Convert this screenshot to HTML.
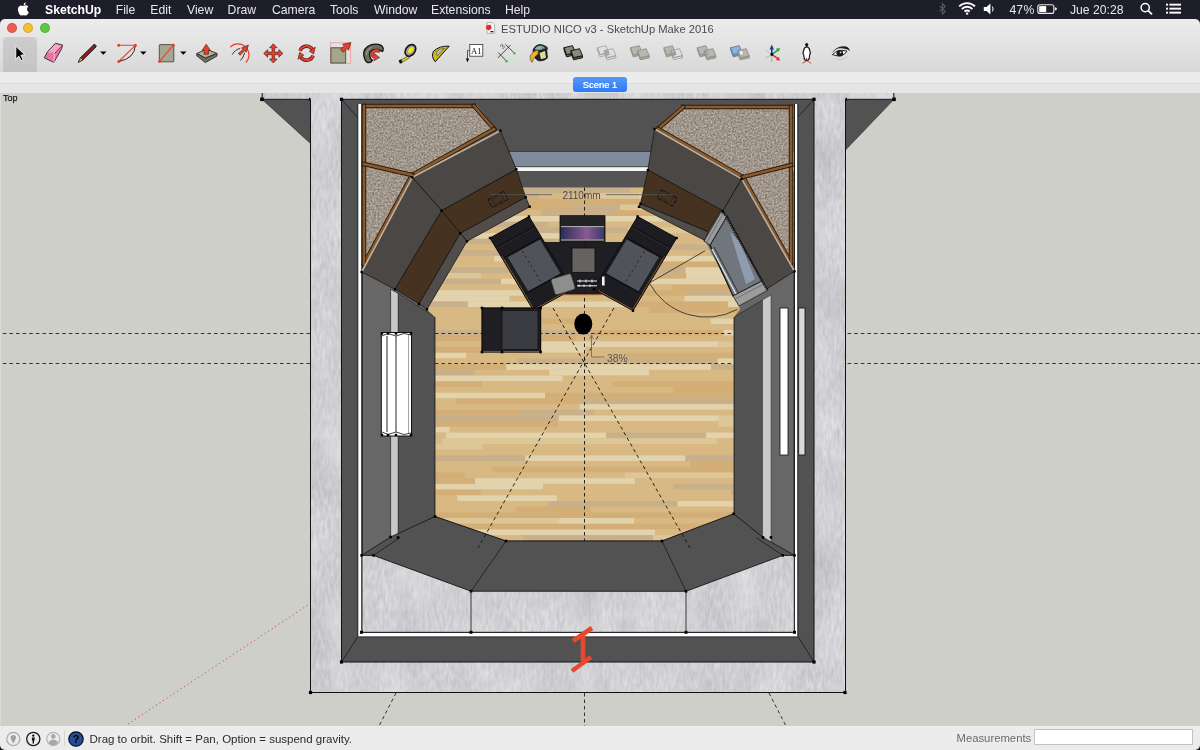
<!DOCTYPE html>
<html><head><meta charset="utf-8">
<style>
html,body{margin:0;padding:0;width:1200px;height:750px;overflow:hidden;background:#cfcfca;font-family:"Liberation Sans",sans-serif;}
#menubar,#win,#status,#scene,#toplbl{will-change:transform;}
#menubar{position:absolute;left:0;top:0;width:1200px;height:19px;background:#1d1e2a;color:#e8e8ea;font-size:12.2px;}
#menubar span{position:absolute;top:3px;white-space:nowrap;}
#win{position:absolute;left:0;top:19px;width:1200px;height:53.5px;background:linear-gradient(#ececec,#d8d8d8);}
.tl{position:absolute;top:4.25px;width:10px;height:10px;border-radius:50%;box-sizing:border-box;border:0.5px solid rgba(0,0,0,0.12)}
#title{position:absolute;left:501px;top:3.6px;font-size:11.2px;color:#4a4a4a;white-space:nowrap;}
#strip1{position:absolute;left:0;top:72px;width:1200px;height:11px;background:#ececec;}
#strip2{position:absolute;left:0;top:83px;width:1200px;height:10px;background:#e5e5e5;border-top:1px solid #d9d9d9;box-sizing:border-box;}
#scene{position:absolute;left:573px;top:77px;width:54px;height:15px;border-radius:3px;background:linear-gradient(#5598f8,#2f7af5);color:#fff;font-size:9.4px;font-weight:normal;text-align:center;line-height:15px;text-shadow:0 0 0.4px #fff;}
#status{position:absolute;left:0;top:726px;width:1200px;height:24px;background:#ececec;}
#status .txt{position:absolute;left:89.5px;top:6.5px;font-size:11.5px;color:#2a2a2a;white-space:nowrap;}
#meas{position:absolute;left:956.5px;top:6.3px;font-size:11.3px;color:#6a6a6a;}
#mbox{position:absolute;left:1033.5px;top:2.5px;width:157.5px;height:14.5px;background:#fff;border:1px solid #c2c2c2;}
.tb{position:absolute;top:37px;}
</style></head><body>
<svg width="1200" height="750" viewBox="0 0 1200 750" style="position:absolute;left:0;top:0;will-change:transform"><defs>
<filter id="tex" x="0" y="0" width="100%" height="100%" color-interpolation-filters="sRGB">
 <feTurbulence type="fractalNoise" baseFrequency="0.03 0.015" numOctaves="2" seed="3" result="n1"/>
 <feTurbulence type="fractalNoise" baseFrequency="0.35 0.1" numOctaves="2" seed="8" result="n2"/>
 <feComposite in="n1" in2="n2" operator="arithmetic" k1="0" k2="0.5" k3="0.5" k4="0" result="n"/>
 <feColorMatrix in="n" type="matrix" values="0.26 0 0 0 0.685  0.26 0 0 0 0.685  0.26 0 0 0 0.7  0 0 0 0 1" result="a"/>
 <feComposite in="a" in2="SourceGraphic" operator="in"/>
</filter>
<filter id="spk" x="0" y="0" width="100%" height="100%" color-interpolation-filters="sRGB">
 <feTurbulence type="fractalNoise" baseFrequency="0.55" numOctaves="2" seed="5" result="n"/>
 <feColorMatrix in="n" type="matrix" values="0.45 0 0 0 0.4  0.45 0 0 0 0.36  0.45 0 0 0 0.315  0 0 0 0 1" result="a"/>
 <feComposite in="a" in2="SourceGraphic" operator="in"/>
</filter>
<clipPath id="floorclip"><polygon points="435.0,317.0 427.0,309.3 467.0,241.3 529.7,206.7 522.0,187.5 645.0,187.5 639.0,206.8 705.0,240.5 740.0,309.0 734.0,317.0 734.0,514.0 662.0,541.0 506.0,541.0 435.0,516.5"/></clipPath>
</defs><rect x="0" y="93" width="1200" height="633" fill="#cfcfca"/><line x1="2.8" y1="333.5" x2="1200" y2="333.5" stroke="#222" stroke-width="0.9" stroke-dasharray="3.6 3"/><line x1="2.8" y1="363.5" x2="1200" y2="363.5" stroke="#222" stroke-width="0.9" stroke-dasharray="3.6 3"/><line x1="128" y1="724" x2="311" y2="603" stroke="#c0503a" stroke-width="1" stroke-dasharray="1.2 3"/><line x1="396" y1="693" x2="379" y2="726" stroke="#222" stroke-width="0.9" stroke-dasharray="3.5 3"/><line x1="769" y1="693" x2="786" y2="726" stroke="#222" stroke-width="0.9" stroke-dasharray="3.5 3"/><line x1="584.5" y1="693" x2="584.5" y2="726" stroke="#222" stroke-width="0.9" stroke-dasharray="3.5 3"/><rect x="262" y="93" width="632" height="6.3" fill="#d1d1d5" filter="url(#tex)"/><polygon points="262.0,99.3 310.5,99.3 310.5,143.5" fill="#525252" stroke="none" stroke-width="0.8" /><line x1="262" y1="99.3" x2="310.5" y2="99.3" stroke="#000" stroke-width="0.8" /><line x1="262" y1="99.3" x2="310.5" y2="143.5" stroke="#222" stroke-width="0.6" /><polygon points="845.5,99.3 894.0,99.3 845.5,150.0" fill="#525252" stroke="none" stroke-width="0.8" /><line x1="845.5" y1="99.3" x2="894" y2="99.3" stroke="#000" stroke-width="0.8" /><line x1="894" y1="99.3" x2="845.5" y2="150" stroke="#222" stroke-width="0.6" /><rect x="260.2" y="97.5" width="3.6" height="3.6" fill="#000"/><rect x="309.0" y="97.8" width="3.0" height="3.0" fill="#000"/><rect x="892.2" y="97.5" width="3.6" height="3.6" fill="#000"/><rect x="844.0" y="97.8" width="3.0" height="3.0" fill="#000"/><line x1="262.2" y1="93" x2="262.2" y2="99" stroke="#111" stroke-width="1" /><line x1="893.8" y1="93" x2="893.8" y2="99" stroke="#111" stroke-width="1" /><rect x="310.5" y="93" width="535" height="599.5" fill="#d1d1d5" filter="url(#tex)"/><polyline points="310.5,99.3 310.5,692.5 845.5,692.5 845.5,99.3" fill="none" stroke="#111" stroke-width="1"/><rect x="341.5" y="99.3" width="472.5" height="562.7" fill="#525252"/><polyline points="341.5,99.3 341.5,662 814,662 814,99.3 341.5,99.3" fill="none" stroke="#111" stroke-width="1"/><line x1="341.5" y1="99.3" x2="358" y2="118" stroke="#111" stroke-width="0.7" /><line x1="814" y1="99.3" x2="797" y2="118" stroke="#111" stroke-width="0.7" /><line x1="341.5" y1="662" x2="359.5" y2="634" stroke="#111" stroke-width="0.7" /><line x1="814" y1="662" x2="796.5" y2="634" stroke="#111" stroke-width="0.7" /><rect x="339.9" y="660.4" width="3.2" height="3.2" fill="#000"/><rect x="812.4" y="660.4" width="3.2" height="3.2" fill="#000"/><rect x="339.9" y="97.7" width="3.2" height="3.2" fill="#000"/><rect x="812.4" y="97.7" width="3.2" height="3.2" fill="#000"/><rect x="308.9" y="690.9" width="3.2" height="3.2" fill="#000"/><rect x="843.4" y="690.9" width="3.2" height="3.2" fill="#000"/><rect x="357.8" y="104" width="440" height="533" fill="#ffffff"/><line x1="357.8" y1="104" x2="357.8" y2="636.5" stroke="#111" stroke-width="0.9" /><line x1="797.8" y1="104" x2="797.8" y2="636.5" stroke="#111" stroke-width="0.9" /><line x1="357.8" y1="636.8" x2="797.8" y2="636.8" stroke="#111" stroke-width="0.8" /><rect x="361.8" y="104" width="432.5" height="528.5" fill="#676767"/><line x1="362" y1="104" x2="362" y2="632.5" stroke="#111" stroke-width="0.9" /><line x1="794.3" y1="104" x2="794.3" y2="632.5" stroke="#111" stroke-width="0.9" /><line x1="361" y1="632.3" x2="794.5" y2="632.3" stroke="#111" stroke-width="0.9" /><polygon points="362.0,555.4 373.5,555.4 471.0,591.2 686.0,591.3 782.7,555.4 794.3,555.4 794.3,632.3 362.0,632.3" fill="#d1d1d5" stroke="none" stroke-width="0.8" filter="url(#tex)"/><line x1="362" y1="104" x2="362" y2="632.5" stroke="#111" stroke-width="0.9" /><line x1="794.3" y1="104" x2="794.3" y2="632.5" stroke="#111" stroke-width="0.9" /><line x1="361" y1="632.3" x2="794.5" y2="632.3" stroke="#111" stroke-width="0.9" /><line x1="471" y1="591.2" x2="471" y2="632.5" stroke="#111" stroke-width="0.8" /><line x1="686" y1="591.3" x2="686" y2="632.5" stroke="#111" stroke-width="0.8" /><rect x="360.0" y="630.8" width="3.0" height="3.0" fill="#000"/><rect x="469.5" y="630.8" width="3.0" height="3.0" fill="#000"/><rect x="684.5" y="630.8" width="3.0" height="3.0" fill="#000"/><rect x="793.0" y="630.8" width="3.0" height="3.0" fill="#000"/><rect x="362.3" y="104" width="431.7" height="47.5" fill="#525252"/><rect x="362.3" y="151.5" width="431.7" height="15" fill="#7f8a9b"/><line x1="361" y1="151.5" x2="794.5" y2="151.5" stroke="#333" stroke-width="0.8" /><rect x="362.3" y="166.5" width="431.7" height="5" fill="#f4f4f4"/><line x1="361" y1="166.7" x2="794.5" y2="166.7" stroke="#222" stroke-width="0.8" /><line x1="361" y1="171.7" x2="794.5" y2="171.7" stroke="#222" stroke-width="0.8" /><rect x="362.3" y="172" width="431.7" height="15.5" fill="#545454"/><line x1="361" y1="187.5" x2="794.5" y2="187.5" stroke="#222" stroke-width="0.6" /><polygon points="398.0,293.0 435.0,317.0 435.0,516.5 398.0,537.0" fill="#525252" stroke="#222" stroke-width="0.6" /><polygon points="390.6,289.0 398.2,293.5 398.2,537.0 390.6,540.5" fill="#c9c9c9" stroke="#222" stroke-width="0.7" /><polygon points="762.5,300.0 734.0,317.0 734.0,514.0 762.5,537.4" fill="#525252" stroke="#222" stroke-width="0.6" /><polygon points="771.0,295.0 762.5,300.0 762.5,537.4 771.0,543.0" fill="#c9c9c9" stroke="#333" stroke-width="0.5" /><g clip-path="url(#floorclip)"><rect x="361" y="187" width="434" height="355" fill="#d8b984"/><rect x="250.0" y="187.5" width="100" height="5.7" fill="#d8b984"/><rect x="350.0" y="187.5" width="50" height="5.7" fill="#d3ae76"/><rect x="400.0" y="187.5" width="100" height="5.7" fill="#e2d3ad"/><rect x="500.0" y="187.5" width="130" height="5.7" fill="#c8b08a"/><rect x="630.0" y="187.5" width="100" height="5.7" fill="#d8b984"/><rect x="730.0" y="187.5" width="200" height="5.7" fill="#d8b984"/><rect x="328.9" y="193.2" width="50" height="5.7" fill="#d8b984"/><rect x="378.9" y="193.2" width="160" height="5.7" fill="#c8b08a"/><rect x="538.9" y="193.2" width="50" height="5.7" fill="#d8b984"/><rect x="588.9" y="193.2" width="50" height="5.7" fill="#ddc698"/><rect x="638.9" y="193.2" width="130" height="5.7" fill="#e2d3ad"/><rect x="768.9" y="193.2" width="50" height="5.7" fill="#c8b08a"/><rect x="285.7" y="198.9" width="130" height="5.7" fill="#e2d3ad"/><rect x="415.7" y="198.9" width="50" height="5.7" fill="#d8b984"/><rect x="465.7" y="198.9" width="50" height="5.7" fill="#d3ae76"/><rect x="515.7" y="198.9" width="100" height="5.7" fill="#d3ae76"/><rect x="615.7" y="198.9" width="75" height="5.7" fill="#d3ae76"/><rect x="690.7" y="198.9" width="75" height="5.7" fill="#ddc698"/><rect x="765.7" y="198.9" width="100" height="5.7" fill="#d3ae76"/><rect x="269.8" y="204.6" width="100" height="5.7" fill="#d3ae76"/><rect x="369.8" y="204.6" width="100" height="5.7" fill="#d3ae76"/><rect x="469.8" y="204.6" width="100" height="5.7" fill="#d3ae76"/><rect x="569.8" y="204.6" width="50" height="5.7" fill="#c8b08a"/><rect x="619.8" y="204.6" width="75" height="5.7" fill="#ddc698"/><rect x="694.8" y="204.6" width="130" height="5.7" fill="#d3ae76"/><rect x="266.0" y="210.3" width="200" height="5.7" fill="#d3ae76"/><rect x="466.0" y="210.3" width="75" height="5.7" fill="#d8b984"/><rect x="541.0" y="210.3" width="75" height="5.7" fill="#c8b08a"/><rect x="616.0" y="210.3" width="100" height="5.7" fill="#d3ae76"/><rect x="716.0" y="210.3" width="160" height="5.7" fill="#d8b984"/><rect x="291.1" y="216.0" width="50" height="5.7" fill="#d8b984"/><rect x="341.1" y="216.0" width="130" height="5.7" fill="#d8b984"/><rect x="471.1" y="216.0" width="160" height="5.7" fill="#e2d3ad"/><rect x="631.1" y="216.0" width="160" height="5.7" fill="#e2d3ad"/><rect x="791.1" y="216.0" width="160" height="5.7" fill="#e2d3ad"/><rect x="347.9" y="221.7" width="100" height="5.7" fill="#c8b08a"/><rect x="447.9" y="221.7" width="100" height="5.7" fill="#c8b08a"/><rect x="547.9" y="221.7" width="160" height="5.7" fill="#d8b984"/><rect x="707.9" y="221.7" width="100" height="5.7" fill="#d8b984"/><rect x="348.1" y="227.4" width="50" height="5.7" fill="#ddc698"/><rect x="398.1" y="227.4" width="130" height="5.7" fill="#d8b984"/><rect x="528.1" y="227.4" width="100" height="5.7" fill="#c8b08a"/><rect x="628.1" y="227.4" width="75" height="5.7" fill="#ddc698"/><rect x="703.1" y="227.4" width="160" height="5.7" fill="#d8b984"/><rect x="247.5" y="233.1" width="75" height="5.7" fill="#c8b08a"/><rect x="322.5" y="233.1" width="50" height="5.7" fill="#d8b984"/><rect x="372.5" y="233.1" width="200" height="5.7" fill="#e2d3ad"/><rect x="572.5" y="233.1" width="130" height="5.7" fill="#d8b984"/><rect x="702.5" y="233.1" width="75" height="5.7" fill="#d8b984"/><rect x="777.5" y="233.1" width="200" height="5.7" fill="#d8b984"/><rect x="244.2" y="238.8" width="200" height="5.7" fill="#d8b984"/><rect x="444.2" y="238.8" width="160" height="5.7" fill="#c8b08a"/><rect x="604.2" y="238.8" width="200" height="5.7" fill="#d8b984"/><rect x="319.5" y="244.5" width="130" height="5.7" fill="#c8b08a"/><rect x="449.5" y="244.5" width="75" height="5.7" fill="#d8b984"/><rect x="524.5" y="244.5" width="50" height="5.7" fill="#e2d3ad"/><rect x="574.5" y="244.5" width="130" height="5.7" fill="#c8b08a"/><rect x="704.5" y="244.5" width="75" height="5.7" fill="#c8b08a"/><rect x="779.5" y="244.5" width="100" height="5.7" fill="#d8b984"/><rect x="350.0" y="250.2" width="160" height="5.7" fill="#c8b08a"/><rect x="510.0" y="250.2" width="200" height="5.7" fill="#d8b984"/><rect x="710.0" y="250.2" width="200" height="5.7" fill="#c8b08a"/><rect x="294.0" y="255.9" width="75" height="5.7" fill="#e2d3ad"/><rect x="369.0" y="255.9" width="50" height="5.7" fill="#e2d3ad"/><rect x="419.0" y="255.9" width="75" height="5.7" fill="#d8b984"/><rect x="494.0" y="255.9" width="130" height="5.7" fill="#e2d3ad"/><rect x="624.0" y="255.9" width="200" height="5.7" fill="#e2d3ad"/><rect x="263.3" y="261.6" width="160" height="5.7" fill="#ddc698"/><rect x="423.3" y="261.6" width="130" height="5.7" fill="#d8b984"/><rect x="553.3" y="261.6" width="200" height="5.7" fill="#d3ae76"/><rect x="753.3" y="261.6" width="200" height="5.7" fill="#d8b984"/><rect x="295.5" y="267.3" width="130" height="5.7" fill="#e2d3ad"/><rect x="425.5" y="267.3" width="100" height="5.7" fill="#c8b08a"/><rect x="525.5" y="267.3" width="160" height="5.7" fill="#c8b08a"/><rect x="685.5" y="267.3" width="50" height="5.7" fill="#e2d3ad"/><rect x="735.5" y="267.3" width="50" height="5.7" fill="#d8b984"/><rect x="785.5" y="267.3" width="200" height="5.7" fill="#d8b984"/><rect x="321.1" y="273.0" width="160" height="5.7" fill="#ddc698"/><rect x="481.1" y="273.0" width="130" height="5.7" fill="#d8b984"/><rect x="611.1" y="273.0" width="75" height="5.7" fill="#d3ae76"/><rect x="686.1" y="273.0" width="50" height="5.7" fill="#e2d3ad"/><rect x="736.1" y="273.0" width="160" height="5.7" fill="#ddc698"/><rect x="296.0" y="278.7" width="75" height="5.7" fill="#c8b08a"/><rect x="371.0" y="278.7" width="130" height="5.7" fill="#c8b08a"/><rect x="501.0" y="278.7" width="200" height="5.7" fill="#e2d3ad"/><rect x="701.0" y="278.7" width="50" height="5.7" fill="#e2d3ad"/><rect x="751.0" y="278.7" width="130" height="5.7" fill="#d8b984"/><rect x="266.7" y="284.4" width="75" height="5.7" fill="#ddc698"/><rect x="341.7" y="284.4" width="130" height="5.7" fill="#d8b984"/><rect x="471.7" y="284.4" width="200" height="5.7" fill="#d8b984"/><rect x="671.7" y="284.4" width="75" height="5.7" fill="#d3ae76"/><rect x="746.7" y="284.4" width="130" height="5.7" fill="#ddc698"/><rect x="310.3" y="290.1" width="50" height="5.7" fill="#e2d3ad"/><rect x="360.3" y="290.1" width="200" height="5.7" fill="#e2d3ad"/><rect x="560.3" y="290.1" width="130" height="5.7" fill="#d3ae76"/><rect x="690.3" y="290.1" width="200" height="5.7" fill="#c8b08a"/><rect x="274.5" y="295.8" width="75" height="5.7" fill="#c8b08a"/><rect x="349.5" y="295.8" width="160" height="5.7" fill="#e2d3ad"/><rect x="509.5" y="295.8" width="100" height="5.7" fill="#d8b984"/><rect x="609.5" y="295.8" width="75" height="5.7" fill="#d8b984"/><rect x="684.5" y="295.8" width="130" height="5.7" fill="#e2d3ad"/><rect x="267.8" y="301.5" width="200" height="5.7" fill="#c8b08a"/><rect x="467.8" y="301.5" width="160" height="5.7" fill="#e2d3ad"/><rect x="627.8" y="301.5" width="100" height="5.7" fill="#d3ae76"/><rect x="727.8" y="301.5" width="100" height="5.7" fill="#e2d3ad"/><rect x="319.1" y="307.2" width="100" height="5.7" fill="#e2d3ad"/><rect x="419.1" y="307.2" width="100" height="5.7" fill="#d8b984"/><rect x="519.1" y="307.2" width="130" height="5.7" fill="#d8b984"/><rect x="649.1" y="307.2" width="130" height="5.7" fill="#d3ae76"/><rect x="779.1" y="307.2" width="130" height="5.7" fill="#c8b08a"/><rect x="255.0" y="312.9" width="160" height="5.7" fill="#e2d3ad"/><rect x="415.0" y="312.9" width="200" height="5.7" fill="#d8b984"/><rect x="615.0" y="312.9" width="130" height="5.7" fill="#d8b984"/><rect x="745.0" y="312.9" width="100" height="5.7" fill="#d8b984"/><rect x="300.7" y="318.6" width="50" height="5.7" fill="#d3ae76"/><rect x="350.7" y="318.6" width="130" height="5.7" fill="#d8b984"/><rect x="480.7" y="318.6" width="100" height="5.7" fill="#d3ae76"/><rect x="580.7" y="318.6" width="130" height="5.7" fill="#d8b984"/><rect x="710.7" y="318.6" width="50" height="5.7" fill="#e2d3ad"/><rect x="760.7" y="318.6" width="50" height="5.7" fill="#d8b984"/><rect x="269.5" y="324.3" width="160" height="5.7" fill="#d3ae76"/><rect x="429.5" y="324.3" width="130" height="5.7" fill="#d8b984"/><rect x="559.5" y="324.3" width="130" height="5.7" fill="#d8b984"/><rect x="689.5" y="324.3" width="100" height="5.7" fill="#d8b984"/><rect x="789.5" y="324.3" width="100" height="5.7" fill="#d3ae76"/><rect x="343.4" y="330.0" width="50" height="5.7" fill="#d8b984"/><rect x="393.4" y="330.0" width="200" height="5.7" fill="#c8b08a"/><rect x="593.4" y="330.0" width="130" height="5.7" fill="#d3ae76"/><rect x="723.4" y="330.0" width="200" height="5.7" fill="#e2d3ad"/><rect x="325.8" y="335.7" width="50" height="5.7" fill="#d3ae76"/><rect x="375.8" y="335.7" width="200" height="5.7" fill="#d3ae76"/><rect x="575.8" y="335.7" width="160" height="5.7" fill="#d8b984"/><rect x="735.8" y="335.7" width="50" height="5.7" fill="#d8b984"/><rect x="785.8" y="335.7" width="200" height="5.7" fill="#d8b984"/><rect x="242.7" y="341.4" width="75" height="5.7" fill="#d3ae76"/><rect x="317.7" y="341.4" width="200" height="5.7" fill="#d8b984"/><rect x="517.7" y="341.4" width="200" height="5.7" fill="#e2d3ad"/><rect x="717.7" y="341.4" width="130" height="5.7" fill="#ddc698"/><rect x="325.6" y="347.1" width="50" height="5.7" fill="#d8b984"/><rect x="375.6" y="347.1" width="160" height="5.7" fill="#d3ae76"/><rect x="535.6" y="347.1" width="50" height="5.7" fill="#e2d3ad"/><rect x="585.6" y="347.1" width="50" height="5.7" fill="#d8b984"/><rect x="635.6" y="347.1" width="100" height="5.7" fill="#d8b984"/><rect x="735.6" y="347.1" width="75" height="5.7" fill="#d8b984"/><rect x="336.3" y="352.8" width="130" height="5.7" fill="#e2d3ad"/><rect x="466.3" y="352.8" width="160" height="5.7" fill="#d8b984"/><rect x="626.3" y="352.8" width="160" height="5.7" fill="#d3ae76"/><rect x="786.3" y="352.8" width="130" height="5.7" fill="#d3ae76"/><rect x="317.6" y="358.5" width="200" height="5.7" fill="#d8b984"/><rect x="517.6" y="358.5" width="200" height="5.7" fill="#c8b08a"/><rect x="717.6" y="358.5" width="200" height="5.7" fill="#e2d3ad"/><rect x="306.2" y="364.2" width="200" height="5.7" fill="#d3ae76"/><rect x="506.2" y="364.2" width="75" height="5.7" fill="#e2d3ad"/><rect x="581.2" y="364.2" width="130" height="5.7" fill="#e2d3ad"/><rect x="711.2" y="364.2" width="50" height="5.7" fill="#c8b08a"/><rect x="761.2" y="364.2" width="130" height="5.7" fill="#e2d3ad"/><rect x="274.1" y="369.9" width="200" height="5.7" fill="#c8b08a"/><rect x="474.1" y="369.9" width="75" height="5.7" fill="#d8b984"/><rect x="549.1" y="369.9" width="100" height="5.7" fill="#e2d3ad"/><rect x="649.1" y="369.9" width="130" height="5.7" fill="#d8b984"/><rect x="779.1" y="369.9" width="50" height="5.7" fill="#e2d3ad"/><rect x="272.7" y="375.6" width="130" height="5.7" fill="#d8b984"/><rect x="402.7" y="375.6" width="160" height="5.7" fill="#e2d3ad"/><rect x="562.7" y="375.6" width="100" height="5.7" fill="#d8b984"/><rect x="662.7" y="375.6" width="100" height="5.7" fill="#d8b984"/><rect x="762.7" y="375.6" width="200" height="5.7" fill="#e2d3ad"/><rect x="307.5" y="381.3" width="75" height="5.7" fill="#e2d3ad"/><rect x="382.5" y="381.3" width="100" height="5.7" fill="#d3ae76"/><rect x="482.5" y="381.3" width="130" height="5.7" fill="#d8b984"/><rect x="612.5" y="381.3" width="160" height="5.7" fill="#d3ae76"/><rect x="772.5" y="381.3" width="200" height="5.7" fill="#e2d3ad"/><rect x="263.3" y="387.0" width="75" height="5.7" fill="#c8b08a"/><rect x="338.3" y="387.0" width="75" height="5.7" fill="#d3ae76"/><rect x="413.3" y="387.0" width="130" height="5.7" fill="#d8b984"/><rect x="543.3" y="387.0" width="130" height="5.7" fill="#d8b984"/><rect x="673.3" y="387.0" width="130" height="5.7" fill="#d3ae76"/><rect x="315.1" y="392.7" width="50" height="5.7" fill="#ddc698"/><rect x="365.1" y="392.7" width="50" height="5.7" fill="#e2d3ad"/><rect x="415.1" y="392.7" width="130" height="5.7" fill="#e2d3ad"/><rect x="545.1" y="392.7" width="200" height="5.7" fill="#d3ae76"/><rect x="745.1" y="392.7" width="200" height="5.7" fill="#d3ae76"/><rect x="256.1" y="398.4" width="200" height="5.7" fill="#d8b984"/><rect x="456.1" y="398.4" width="75" height="5.7" fill="#d3ae76"/><rect x="531.1" y="398.4" width="50" height="5.7" fill="#d3ae76"/><rect x="581.1" y="398.4" width="160" height="5.7" fill="#c8b08a"/><rect x="741.1" y="398.4" width="160" height="5.7" fill="#d8b984"/><rect x="249.7" y="404.1" width="130" height="5.7" fill="#c8b08a"/><rect x="379.7" y="404.1" width="200" height="5.7" fill="#d8b984"/><rect x="579.7" y="404.1" width="200" height="5.7" fill="#e2d3ad"/><rect x="779.7" y="404.1" width="50" height="5.7" fill="#d3ae76"/><rect x="358.9" y="409.8" width="160" height="5.7" fill="#d3ae76"/><rect x="518.9" y="409.8" width="75" height="5.7" fill="#c8b08a"/><rect x="593.9" y="409.8" width="200" height="5.7" fill="#d8b984"/><rect x="793.9" y="409.8" width="100" height="5.7" fill="#e2d3ad"/><rect x="328.8" y="415.5" width="100" height="5.7" fill="#e2d3ad"/><rect x="428.8" y="415.5" width="130" height="5.7" fill="#c8b08a"/><rect x="558.8" y="415.5" width="160" height="5.7" fill="#e2d3ad"/><rect x="718.8" y="415.5" width="100" height="5.7" fill="#ddc698"/><rect x="358.3" y="421.2" width="200" height="5.7" fill="#d3ae76"/><rect x="558.3" y="421.2" width="160" height="5.7" fill="#d8b984"/><rect x="718.3" y="421.2" width="50" height="5.7" fill="#ddc698"/><rect x="768.3" y="421.2" width="75" height="5.7" fill="#d3ae76"/><rect x="249.8" y="426.9" width="200" height="5.7" fill="#e2d3ad"/><rect x="449.8" y="426.9" width="100" height="5.7" fill="#d8b984"/><rect x="549.8" y="426.9" width="160" height="5.7" fill="#d8b984"/><rect x="709.8" y="426.9" width="50" height="5.7" fill="#d8b984"/><rect x="759.8" y="426.9" width="200" height="5.7" fill="#c8b08a"/><rect x="246.1" y="432.6" width="200" height="5.7" fill="#d8b984"/><rect x="446.1" y="432.6" width="160" height="5.7" fill="#e2d3ad"/><rect x="606.1" y="432.6" width="100" height="5.7" fill="#c8b08a"/><rect x="706.1" y="432.6" width="160" height="5.7" fill="#e2d3ad"/><rect x="241.9" y="438.3" width="200" height="5.7" fill="#d8b984"/><rect x="441.9" y="438.3" width="75" height="5.7" fill="#ddc698"/><rect x="516.9" y="438.3" width="200" height="5.7" fill="#ddc698"/><rect x="716.9" y="438.3" width="200" height="5.7" fill="#d8b984"/><rect x="282.2" y="444.0" width="75" height="5.7" fill="#d8b984"/><rect x="357.2" y="444.0" width="75" height="5.7" fill="#c8b08a"/><rect x="432.2" y="444.0" width="50" height="5.7" fill="#ddc698"/><rect x="482.2" y="444.0" width="200" height="5.7" fill="#d8b984"/><rect x="682.2" y="444.0" width="100" height="5.7" fill="#d8b984"/><rect x="782.2" y="444.0" width="160" height="5.7" fill="#e2d3ad"/><rect x="269.9" y="449.7" width="160" height="5.7" fill="#d3ae76"/><rect x="429.9" y="449.7" width="130" height="5.7" fill="#d8b984"/><rect x="559.9" y="449.7" width="200" height="5.7" fill="#d8b984"/><rect x="759.9" y="449.7" width="75" height="5.7" fill="#d8b984"/><rect x="265.4" y="455.4" width="100" height="5.7" fill="#d3ae76"/><rect x="365.4" y="455.4" width="160" height="5.7" fill="#c8b08a"/><rect x="525.4" y="455.4" width="160" height="5.7" fill="#e2d3ad"/><rect x="685.4" y="455.4" width="50" height="5.7" fill="#c8b08a"/><rect x="735.4" y="455.4" width="50" height="5.7" fill="#c8b08a"/><rect x="785.4" y="455.4" width="100" height="5.7" fill="#e2d3ad"/><rect x="280.5" y="461.1" width="160" height="5.7" fill="#d8b984"/><rect x="440.5" y="461.1" width="75" height="5.7" fill="#d8b984"/><rect x="515.5" y="461.1" width="100" height="5.7" fill="#d8b984"/><rect x="615.5" y="461.1" width="75" height="5.7" fill="#d8b984"/><rect x="690.5" y="461.1" width="75" height="5.7" fill="#d3ae76"/><rect x="765.5" y="461.1" width="200" height="5.7" fill="#d8b984"/><rect x="287.4" y="466.8" width="130" height="5.7" fill="#c8b08a"/><rect x="417.4" y="466.8" width="75" height="5.7" fill="#d8b984"/><rect x="492.4" y="466.8" width="160" height="5.7" fill="#d3ae76"/><rect x="652.4" y="466.8" width="160" height="5.7" fill="#d3ae76"/><rect x="289.8" y="472.5" width="75" height="5.7" fill="#d8b984"/><rect x="364.8" y="472.5" width="100" height="5.7" fill="#d3ae76"/><rect x="464.8" y="472.5" width="160" height="5.7" fill="#d8b984"/><rect x="624.8" y="472.5" width="160" height="5.7" fill="#ddc698"/><rect x="784.8" y="472.5" width="75" height="5.7" fill="#d8b984"/><rect x="300.0" y="478.2" width="100" height="5.7" fill="#d8b984"/><rect x="400.0" y="478.2" width="75" height="5.7" fill="#d3ae76"/><rect x="475.0" y="478.2" width="160" height="5.7" fill="#e2d3ad"/><rect x="635.0" y="478.2" width="100" height="5.7" fill="#d8b984"/><rect x="735.0" y="478.2" width="200" height="5.7" fill="#d8b984"/><rect x="343.3" y="483.9" width="200" height="5.7" fill="#e2d3ad"/><rect x="543.3" y="483.9" width="130" height="5.7" fill="#d8b984"/><rect x="673.3" y="483.9" width="75" height="5.7" fill="#c8b08a"/><rect x="748.3" y="483.9" width="160" height="5.7" fill="#d8b984"/><rect x="320.8" y="489.6" width="160" height="5.7" fill="#d3ae76"/><rect x="480.8" y="489.6" width="50" height="5.7" fill="#d8b984"/><rect x="530.8" y="489.6" width="200" height="5.7" fill="#d8b984"/><rect x="730.8" y="489.6" width="50" height="5.7" fill="#c8b08a"/><rect x="780.8" y="489.6" width="100" height="5.7" fill="#d3ae76"/><rect x="357.2" y="495.3" width="50" height="5.7" fill="#c8b08a"/><rect x="407.2" y="495.3" width="50" height="5.7" fill="#d8b984"/><rect x="457.2" y="495.3" width="100" height="5.7" fill="#e2d3ad"/><rect x="557.2" y="495.3" width="200" height="5.7" fill="#d8b984"/><rect x="757.2" y="495.3" width="130" height="5.7" fill="#ddc698"/><rect x="267.5" y="501.0" width="100" height="5.7" fill="#e2d3ad"/><rect x="367.5" y="501.0" width="50" height="5.7" fill="#e2d3ad"/><rect x="417.5" y="501.0" width="130" height="5.7" fill="#d8b984"/><rect x="547.5" y="501.0" width="130" height="5.7" fill="#c8b08a"/><rect x="677.5" y="501.0" width="200" height="5.7" fill="#e2d3ad"/><rect x="315.8" y="506.7" width="200" height="5.7" fill="#d8b984"/><rect x="515.8" y="506.7" width="75" height="5.7" fill="#d3ae76"/><rect x="590.8" y="506.7" width="200" height="5.7" fill="#d8b984"/><rect x="790.8" y="506.7" width="50" height="5.7" fill="#d8b984"/><rect x="258.0" y="512.4" width="100" height="5.7" fill="#ddc698"/><rect x="358.0" y="512.4" width="75" height="5.7" fill="#d8b984"/><rect x="433.0" y="512.4" width="200" height="5.7" fill="#d3ae76"/><rect x="633.0" y="512.4" width="200" height="5.7" fill="#d3ae76"/><rect x="259.1" y="518.1" width="100" height="5.7" fill="#e2d3ad"/><rect x="359.1" y="518.1" width="200" height="5.7" fill="#ddc698"/><rect x="559.1" y="518.1" width="75" height="5.7" fill="#e2d3ad"/><rect x="634.1" y="518.1" width="100" height="5.7" fill="#d8b984"/><rect x="734.1" y="518.1" width="160" height="5.7" fill="#e2d3ad"/><rect x="298.3" y="523.8" width="160" height="5.7" fill="#d3ae76"/><rect x="458.3" y="523.8" width="160" height="5.7" fill="#d3ae76"/><rect x="618.3" y="523.8" width="160" height="5.7" fill="#d3ae76"/><rect x="778.3" y="523.8" width="160" height="5.7" fill="#e2d3ad"/><rect x="280.0" y="529.5" width="75" height="5.7" fill="#d3ae76"/><rect x="355.0" y="529.5" width="100" height="5.7" fill="#e2d3ad"/><rect x="455.0" y="529.5" width="200" height="5.7" fill="#e2d3ad"/><rect x="655.0" y="529.5" width="200" height="5.7" fill="#d8b984"/><rect x="263.1" y="535.2" width="100" height="5.7" fill="#e2d3ad"/><rect x="363.1" y="535.2" width="160" height="5.7" fill="#d8b984"/><rect x="523.1" y="535.2" width="130" height="5.7" fill="#c8b08a"/><rect x="653.1" y="535.2" width="100" height="5.7" fill="#ddc698"/><rect x="753.1" y="535.2" width="50" height="5.7" fill="#e2d3ad"/><rect x="281.2" y="540.9" width="50" height="5.7" fill="#e2d3ad"/><rect x="331.2" y="540.9" width="75" height="5.7" fill="#d8b984"/><rect x="406.2" y="540.9" width="50" height="5.7" fill="#d3ae76"/><rect x="456.2" y="540.9" width="160" height="5.7" fill="#d8b984"/><rect x="616.2" y="540.9" width="100" height="5.7" fill="#e2d3ad"/><rect x="716.2" y="540.9" width="75" height="5.7" fill="#d3ae76"/><rect x="791.2" y="540.9" width="50" height="5.7" fill="#d3ae76"/></g><polyline points="435.0,317.0 435.0,516.5 506.0,541.0 662.0,541.0 734.0,514.0 734.0,317.0" fill="none" stroke="#222" stroke-width="0.8"/><line x1="435" y1="333.5" x2="734" y2="333.5" stroke="#222" stroke-width="0.9" stroke-dasharray="3.5 3"/><line x1="435" y1="363.5" x2="734" y2="363.5" stroke="#222" stroke-width="0.9" stroke-dasharray="3.5 3"/><polygon points="361.6,555.4 390.5,537.0 435.0,516.5 506.0,541.0 662.0,541.0 733.6,513.8 763.0,537.4 794.5,555.4 782.7,555.4 686.0,591.3 471.0,591.2 373.5,555.4" fill="#525252" stroke="#111" stroke-width="0.8" /><line x1="506" y1="541" x2="471" y2="591.2" stroke="#111" stroke-width="0.7" /><line x1="662" y1="541" x2="686" y2="591.3" stroke="#111" stroke-width="0.7" /><line x1="373.5" y1="555.4" x2="399.6" y2="537.8" stroke="#111" stroke-width="0.7" /><line x1="782.7" y1="555.4" x2="756.5" y2="537.8" stroke="#111" stroke-width="0.7" /><rect x="360.3" y="554.1" width="2.6" height="2.6" fill="#000"/><rect x="433.7" y="515.2" width="2.6" height="2.6" fill="#000"/><rect x="504.7" y="539.7" width="2.6" height="2.6" fill="#000"/><rect x="660.7" y="539.7" width="2.6" height="2.6" fill="#000"/><rect x="732.3" y="512.5" width="2.6" height="2.6" fill="#000"/><rect x="793.2" y="554.1" width="2.6" height="2.6" fill="#000"/><rect x="684.7" y="590.0" width="2.6" height="2.6" fill="#000"/><rect x="469.7" y="589.9" width="2.6" height="2.6" fill="#000"/><rect x="372.2" y="554.1" width="2.6" height="2.6" fill="#000"/><rect x="781.4" y="554.1" width="2.6" height="2.6" fill="#000"/><rect x="389.2" y="535.7" width="2.6" height="2.6" fill="#000"/><rect x="396.7" y="536.2" width="2.6" height="2.6" fill="#000"/><rect x="761.7" y="536.1" width="2.6" height="2.6" fill="#000"/><rect x="769.7" y="536.1" width="2.6" height="2.6" fill="#000"/><polygon points="362.0,104.0 476.0,104.0 496.0,129.0 412.0,175.0 362.0,266.0" fill="#a49c93" stroke="none" stroke-width="0.8" filter="url(#spk)"/><line x1="365" y1="106" x2="474" y2="106" stroke="#2a1a0c" stroke-width="4.4" stroke-linecap="square"/><line x1="365" y1="106" x2="474" y2="106" stroke="#8a5a2e" stroke-width="2.6" stroke-linecap="square"/><line x1="474" y1="106" x2="494" y2="129" stroke="#2a1a0c" stroke-width="4.4" stroke-linecap="square"/><line x1="474" y1="106" x2="494" y2="129" stroke="#8a5a2e" stroke-width="2.6" stroke-linecap="square"/><line x1="494" y1="129" x2="412" y2="175" stroke="#2a1a0c" stroke-width="4.4" stroke-linecap="square"/><line x1="494" y1="129" x2="412" y2="175" stroke="#8a5a2e" stroke-width="2.6" stroke-linecap="square"/><line x1="412" y1="175" x2="364" y2="264" stroke="#2a1a0c" stroke-width="4.4" stroke-linecap="square"/><line x1="412" y1="175" x2="364" y2="264" stroke="#8a5a2e" stroke-width="2.6" stroke-linecap="square"/><line x1="364" y1="106" x2="364" y2="264" stroke="#2a1a0c" stroke-width="4.4" stroke-linecap="square"/><line x1="364" y1="106" x2="364" y2="264" stroke="#8a5a2e" stroke-width="2.6" stroke-linecap="square"/><line x1="364" y1="164" x2="412" y2="175" stroke="#2a1a0c" stroke-width="4.4" stroke-linecap="square"/><line x1="364" y1="164" x2="412" y2="175" stroke="#8a5a2e" stroke-width="2.6" stroke-linecap="square"/><polygon points="681.6,105.0 793.6,105.0 793.6,265.0 743.0,176.0 655.5,129.0" fill="#a49c93" stroke="none" stroke-width="0.8" filter="url(#spk)"/><line x1="683" y1="107" x2="791" y2="107" stroke="#2a1a0c" stroke-width="4.4" stroke-linecap="square"/><line x1="683" y1="107" x2="791" y2="107" stroke="#8a5a2e" stroke-width="2.6" stroke-linecap="square"/><line x1="683" y1="107" x2="658" y2="129" stroke="#2a1a0c" stroke-width="4.4" stroke-linecap="square"/><line x1="683" y1="107" x2="658" y2="129" stroke="#8a5a2e" stroke-width="2.6" stroke-linecap="square"/><line x1="658" y1="129" x2="743" y2="177" stroke="#2a1a0c" stroke-width="4.4" stroke-linecap="square"/><line x1="658" y1="129" x2="743" y2="177" stroke="#8a5a2e" stroke-width="2.6" stroke-linecap="square"/><line x1="743" y1="177" x2="791" y2="263" stroke="#2a1a0c" stroke-width="4.4" stroke-linecap="square"/><line x1="743" y1="177" x2="791" y2="263" stroke="#8a5a2e" stroke-width="2.6" stroke-linecap="square"/><line x1="791" y1="107" x2="791" y2="263" stroke="#2a1a0c" stroke-width="4.4" stroke-linecap="square"/><line x1="791" y1="107" x2="791" y2="263" stroke="#8a5a2e" stroke-width="2.6" stroke-linecap="square"/><line x1="791" y1="165" x2="743" y2="177" stroke="#2a1a0c" stroke-width="4.4" stroke-linecap="square"/><line x1="791" y1="165" x2="743" y2="177" stroke="#8a5a2e" stroke-width="2.6" stroke-linecap="square"/><polygon points="500.3,130.7 516.3,169.3 441.7,210.7 412.3,177.3" fill="#4a4745" stroke="#111" stroke-width="0.7" /><polygon points="412.3,177.3 441.7,210.7 395.0,289.3 361.7,272.0" fill="#4a4745" stroke="#111" stroke-width="0.7" /><polygon points="441.7,210.7 516.3,169.3 525.7,197.3 460.3,233.3" fill="#463220" stroke="#111" stroke-width="0.7" /><polygon points="441.7,210.7 460.3,233.3 419.0,304.0 395.0,289.3" fill="#463220" stroke="#111" stroke-width="0.7" /><polygon points="460.3,233.3 525.7,197.3 529.7,206.7 467.0,241.3" fill="#504d4a" stroke="#111" stroke-width="0.7" /><polygon points="460.3,233.3 467.0,241.3 427.0,309.3 419.0,304.0" fill="#504d4a" stroke="#111" stroke-width="0.7" /><line x1="500.3" y1="130.7" x2="412.3" y2="177.3" stroke="#c0b2a2" stroke-width="1.6" /><line x1="412.3" y1="177.3" x2="361.7" y2="272" stroke="#c0b2a2" stroke-width="1.6" /><rect x="499.1" y="129.5" width="2.4" height="2.4" fill="#000"/><rect x="528.5" y="205.5" width="2.4" height="2.4" fill="#000"/><rect x="465.8" y="240.1" width="2.4" height="2.4" fill="#000"/><rect x="425.8" y="308.1" width="2.4" height="2.4" fill="#000"/><rect x="360.5" y="270.8" width="2.4" height="2.4" fill="#000"/><rect x="411.1" y="176.1" width="2.4" height="2.4" fill="#000"/><rect x="440.5" y="209.5" width="2.4" height="2.4" fill="#000"/><rect x="459.1" y="232.1" width="2.4" height="2.4" fill="#000"/><rect x="393.8" y="288.1" width="2.4" height="2.4" fill="#000"/><rect x="417.8" y="302.8" width="2.4" height="2.4" fill="#000"/><rect x="515.1" y="168.1" width="2.4" height="2.4" fill="#000"/><rect x="524.5" y="196.1" width="2.4" height="2.4" fill="#000"/><polygon points="654.6,129.0 741.7,178.9 722.6,211.2 647.9,170.1" fill="#4a4745" stroke="#111" stroke-width="0.7" /><polygon points="647.9,170.1 721.2,209.7 708.0,231.7 640.5,203.8" fill="#463220" stroke="#111" stroke-width="0.7" /><polygon points="640.5,203.8 708.0,231.7 705.0,240.5 639.0,206.8" fill="#504d4a" stroke="#111" stroke-width="0.7" /><polygon points="741.7,178.9 794.5,271.3 766.6,289.0 722.6,211.2" fill="#4a4745" stroke="#111" stroke-width="0.7" /><line x1="654.6" y1="129" x2="741.7" y2="178.9" stroke="#c0b2a2" stroke-width="1.6" /><line x1="741.7" y1="178.9" x2="794.5" y2="271.3" stroke="#c0b2a2" stroke-width="1.6" /><rect x="653.4" y="127.8" width="2.4" height="2.4" fill="#000"/><rect x="646.7" y="168.9" width="2.4" height="2.4" fill="#000"/><rect x="639.3" y="202.6" width="2.4" height="2.4" fill="#000"/><rect x="637.8" y="205.6" width="2.4" height="2.4" fill="#000"/><rect x="703.8" y="239.3" width="2.4" height="2.4" fill="#000"/><rect x="740.5" y="177.7" width="2.4" height="2.4" fill="#000"/><rect x="721.4" y="210.0" width="2.4" height="2.4" fill="#000"/><rect x="793.3" y="270.1" width="2.4" height="2.4" fill="#000"/><rect x="765.4" y="287.8" width="2.4" height="2.4" fill="#000"/><polygon points="710.0,245.0 727.0,216.0 762.0,281.0 733.0,296.0" fill="#70767e" stroke="#111" stroke-width="1.2" /><polygon points="730.0,232.0 740.0,242.0 755.0,279.0 746.0,284.0" fill="#8f9cae" stroke="none" stroke-width="0.8" /><line x1="712" y1="249" x2="736" y2="294" stroke="#e0e0e0" stroke-width="1.4" /><line x1="714" y1="247" x2="738" y2="292" stroke="#222" stroke-width="0.8" /><polygon points="704.0,241.0 721.0,212.0 727.0,216.0 710.0,245.0" fill="#9c9c9c" stroke="#1a1a1a" stroke-width="0.7" /><polygon points="733.0,296.0 762.0,281.0 768.0,290.0 739.0,306.0" fill="#9c9c9c" stroke="#1a1a1a" stroke-width="0.7" /><line x1="735" y1="299" x2="764" y2="284" stroke="#555" stroke-width="0.6" /><line x1="707" y1="242" x2="723" y2="214" stroke="#555" stroke-width="0.6" /><line x1="723.5" y1="212" x2="767" y2="289.5" stroke="#1a1a1a" stroke-width="2.4" stroke-dasharray="1.5 1"/><path d="M705,250.8 L649.3,283 A65,65 0 0 0 737.3,309.4" fill="none" stroke="#222" stroke-width="0.8"/><rect x="489" y="195" width="18" height="9" fill="none" stroke="#111" stroke-width="0.9" stroke-dasharray="5 1.5" transform="rotate(-28 498 199.5)"/><rect x="493" y="197" width="10" height="5" fill="none" stroke="#222" stroke-width="0.6" transform="rotate(-28 498 199.5)"/><rect x="658" y="193.5" width="18" height="9" fill="none" stroke="#111" stroke-width="0.9" stroke-dasharray="5 1.5" transform="rotate(28 667 198)"/><rect x="662" y="195.5" width="10" height="5" fill="none" stroke="#222" stroke-width="0.6" transform="rotate(28 667 198)"/><line x1="491" y1="194.7" x2="552" y2="194.7" stroke="#555" stroke-width="0.8" /><line x1="606" y1="194.7" x2="672.6" y2="194.7" stroke="#555" stroke-width="0.8" /><text x="581.5" y="198.6" font-size="10" fill="#4a4a4a" text-anchor="middle" font-family="Liberation Sans">2110mm</text><line x1="584.5" y1="187.5" x2="584.5" y2="541" stroke="#111" stroke-width="0.9" stroke-dasharray="3.5 3"/><line x1="614" y1="308" x2="478" y2="548" stroke="#111" stroke-width="0.9" stroke-dasharray="3.5 3"/><line x1="553" y1="308" x2="690" y2="548" stroke="#111" stroke-width="0.9" stroke-dasharray="3.5 3"/><polygon points="543.6,242.5 623.0,242.5 612.0,286.0 600.6,293.5 566.0,293.5 555.0,286.0" fill="#1f1f23" stroke="#0a0a0a" stroke-width="0.8" /><line x1="564.3" y1="294.6" x2="602.3" y2="294.6" stroke="#8a5a2e" stroke-width="1.0" /><polygon points="490.0,238.0 529.0,216.5 572.6,289.2 533.6,310.7" fill="#1d1d21" stroke="#0a0a0a" stroke-width="1.0" /><line x1="533.9492" y1="309.3336" x2="502.18399999999997" y2="256.371" stroke="#8a5a2e" stroke-width="0.9" /><line x1="534.052" y1="309.505" x2="568.654" y2="290.42650000000003" stroke="#8a5a2e" stroke-width="0.9" /><line x1="496.787" y1="247.3725" x2="534.0169999999999" y2="226.845" stroke="#0a0a0a" stroke-width="1.0" /><line x1="497.301" y1="248.2295" x2="534.531" y2="227.702" stroke="#34343a" stroke-width="0.7" /><line x1="503.212" y1="258.085" x2="540.442" y2="237.5575" stroke="#0a0a0a" stroke-width="1.0" /><polygon points="507.2,257.0 540.1,238.9 560.9,273.6 528.0,291.7" fill="#50535a" stroke="#101012" stroke-width="0.7" /><line x1="522.274" y1="250.996" x2="541.292" y2="282.705" stroke="#1a1a1a" stroke-width="0.8" stroke-dasharray="2.5 3"/><line x1="524.8" y1="294.079" x2="562.03" y2="273.5515" stroke="#0a0a0a" stroke-width="1.0" /><rect x="488.8" y="236.8" width="2.4" height="2.4" fill="#000"/><rect x="527.8" y="215.3" width="2.4" height="2.4" fill="#000"/><rect x="571.4" y="288.0" width="2.4" height="2.4" fill="#000"/><rect x="532.4" y="309.5" width="2.4" height="2.4" fill="#000"/><polygon points="676.6,238.0 637.6,216.5 594.0,289.2 633.0,310.7" fill="#1d1d21" stroke="#0a0a0a" stroke-width="1.0" /><line x1="632.6507999999999" y1="309.3336" x2="664.4159999999999" y2="256.371" stroke="#8a5a2e" stroke-width="0.9" /><line x1="632.5479999999999" y1="309.505" x2="597.9459999999999" y2="290.42650000000003" stroke="#8a5a2e" stroke-width="0.9" /><line x1="669.813" y1="247.3725" x2="632.583" y2="226.845" stroke="#0a0a0a" stroke-width="1.0" /><line x1="669.299" y1="248.2295" x2="632.069" y2="227.702" stroke="#34343a" stroke-width="0.7" /><line x1="663.3879999999999" y1="258.085" x2="626.1579999999999" y2="237.5575" stroke="#0a0a0a" stroke-width="1.0" /><polygon points="659.4,257.0 626.5,238.9 605.7,273.6 638.6,291.7" fill="#50535a" stroke="#101012" stroke-width="0.7" /><line x1="644.3259999999999" y1="250.996" x2="625.308" y2="282.705" stroke="#1a1a1a" stroke-width="0.8" stroke-dasharray="2.5 3"/><line x1="641.8" y1="294.079" x2="604.5699999999999" y2="273.5515" stroke="#0a0a0a" stroke-width="1.0" /><rect x="675.4" y="236.8" width="2.4" height="2.4" fill="#000"/><rect x="636.4" y="215.3" width="2.4" height="2.4" fill="#000"/><rect x="592.8" y="288.0" width="2.4" height="2.4" fill="#000"/><rect x="631.8" y="309.5" width="2.4" height="2.4" fill="#000"/><rect x="560" y="215.7" width="45" height="26" fill="#232326" stroke="#0a0a0a" stroke-width="0.8"/><defs><linearGradient id="scr" x1="0" x2="1" y1="0" y2="0"><stop offset="0" stop-color="#2a2e58"/><stop offset="0.6" stop-color="#8a5a90"/><stop offset="1" stop-color="#3a3a6a"/></linearGradient></defs><rect x="561" y="226.8" width="43" height="12.8" fill="url(#scr)"/><line x1="561" y1="226.6" x2="604" y2="226.6" stroke="#d8d8e0" stroke-width="0.8" /><line x1="561" y1="240" x2="604" y2="240" stroke="#d0d0d8" stroke-width="0.9" /><rect x="572" y="248" width="23" height="24.4" fill="#5f5d5b" stroke="#0a0a0a" stroke-width="0.7"/><line x1="573" y1="250" x2="594" y2="250" stroke="#6e6c6a" stroke-width="0.8" /><line x1="573" y1="252" x2="594" y2="252" stroke="#6e6c6a" stroke-width="0.8" /><line x1="573" y1="254" x2="594" y2="254" stroke="#6e6c6a" stroke-width="0.8" /><line x1="573" y1="256" x2="594" y2="256" stroke="#6e6c6a" stroke-width="0.8" /><line x1="573" y1="258" x2="594" y2="258" stroke="#6e6c6a" stroke-width="0.8" /><line x1="573" y1="260" x2="594" y2="260" stroke="#6e6c6a" stroke-width="0.8" /><line x1="573" y1="262" x2="594" y2="262" stroke="#6e6c6a" stroke-width="0.8" /><line x1="573" y1="264" x2="594" y2="264" stroke="#6e6c6a" stroke-width="0.8" /><line x1="573" y1="266" x2="594" y2="266" stroke="#6e6c6a" stroke-width="0.8" /><line x1="573" y1="268" x2="594" y2="268" stroke="#6e6c6a" stroke-width="0.8" /><line x1="573" y1="270" x2="594" y2="270" stroke="#6e6c6a" stroke-width="0.8" /><rect x="552.5" y="276" width="21" height="16.5" rx="2" fill="#8e8e8e" stroke="#2a2a2a" stroke-width="0.6" transform="rotate(-17 563 284)"/><rect x="576" y="278.6" width="22" height="9.2" fill="#1a1a1e"/><path d="M577,281 L597,281 M577,285.8 L597,285.8 M580,279.5 L580,282.5 M586,279.5 L586,282.5 M592,279.5 L592,282.5 M579,284.5 L579,287 M584,284.5 L584,287 M590,284.5 L590,287" stroke="#f0f0f0" stroke-width="1"/><rect x="602" y="276.5" width="2.6" height="9" fill="#f4f4f4"/><ellipse cx="583.3" cy="324" rx="9" ry="10.5" fill="#000"/><rect x="482" y="308" width="58.6" height="44" fill="#1f1f23" stroke="#0a0a0a" stroke-width="1.2"/><rect x="502" y="310.5" width="36" height="39" fill="#3a3b40" stroke="#0a0a0a" stroke-width="0.6"/><line x1="482" y1="351.5" x2="540.6" y2="351.5" stroke="#8a5a2e" stroke-width="0.9" /><rect x="480.7" y="306.7" width="2.6" height="2.6" fill="#000"/><rect x="539.3" y="306.7" width="2.6" height="2.6" fill="#000"/><rect x="480.7" y="350.7" width="2.6" height="2.6" fill="#000"/><rect x="539.3" y="350.7" width="2.6" height="2.6" fill="#000"/><rect x="500.7" y="306.7" width="2.6" height="2.6" fill="#000"/><rect x="500.7" y="350.7" width="2.6" height="2.6" fill="#000"/><path d="M591.5,336 L591.5,357 L604.5,357" fill="none" stroke="#606060" stroke-width="0.8"/><path d="M589.6,339 L591.5,335 L593.4,339" fill="none" stroke="#606060" stroke-width="0.7"/><text x="607" y="362" font-size="10.3" fill="#555" font-family="Liberation Sans">38%</text><rect x="780" y="308" width="8" height="147" fill="#fff" stroke="#111" stroke-width="0.8"/><rect x="798.7" y="308" width="6.3" height="147" fill="#d8d8d8" stroke="#111" stroke-width="0.8"/><rect x="381.3" y="332.5" width="30.2" height="103.5" fill="#fff" stroke="#111" stroke-width="1"/><line x1="387" y1="336" x2="387" y2="432" stroke="#111" stroke-width="0.9" /><line x1="396" y1="336" x2="396" y2="432" stroke="#111" stroke-width="0.9" /><line x1="408.5" y1="334" x2="408.5" y2="434" stroke="#999" stroke-width="0.9" /><path d="M382,336 L388,333.5 L396,336 L404,333.5 L411,335" fill="none" stroke="#111" stroke-width="0.8"/><path d="M382,432 L388,434.5 L396,432 L404,434.5 L411,433" fill="none" stroke="#111" stroke-width="0.8"/><rect x="380.8" y="332.3" width="2.4" height="2.4" fill="#000"/><rect x="409.8" y="332.3" width="2.4" height="2.4" fill="#000"/><rect x="380.8" y="433.8" width="2.4" height="2.4" fill="#000"/><rect x="409.8" y="433.8" width="2.4" height="2.4" fill="#000"/><rect x="386.8" y="332.3" width="2.4" height="2.4" fill="#000"/><rect x="394.8" y="332.3" width="2.4" height="2.4" fill="#000"/><rect x="386.8" y="433.8" width="2.4" height="2.4" fill="#000"/><rect x="394.8" y="433.8" width="2.4" height="2.4" fill="#000"/><path d="M573,641 L592,628 M583,634 L583,664 M572,671 L591,657" stroke="#e8482e" stroke-width="4.6" stroke-linecap="butt" fill="none"/></svg>
<div id="menubar">
 <span style="left:45px;font-weight:bold;color:#fff">SketchUp</span>
 <span style="left:115.7px">File</span>
 <span style="left:150.3px">Edit</span>
 <span style="left:187px">View</span>
 <span style="left:227.6px">Draw</span>
 <span style="left:272px">Camera</span>
 <span style="left:330px">Tools</span>
 <span style="left:374px">Window</span>
 <span style="left:431px">Extensions</span>
 <span style="left:505px">Help</span>
 <span style="left:1009.5px">47</span><span style="left:1023.6px">%</span>
 <span style="left:1070px">Jue 20:28</span>
</div>
<div id="win">
 <div class="tl" style="left:6.75px;background:#ee5b53"></div>
 <div class="tl" style="left:23.25px;background:#f5bd30"></div>
 <div class="tl" style="left:40px;background:#5ec940"></div>
 <div id="title">ESTUDIO NICO v3 - SketchUp Make 2016</div>
 <div style="position:absolute;left:3px;top:18px;width:34px;height:35px;background:linear-gradient(#cdcdcd,#c4c4c4);border-radius:4px 4px 0 0"></div>
</div>
<div id="strip1"></div><div id="strip2"></div>
<div id="scene">Scene 1</div>
<div id="toplbl" style="position:absolute;left:2.6px;top:93px;font-size:9px;color:#1a1a1a;-webkit-text-stroke:0.25px #1a1a1a">Top</div>
<div style="position:absolute;left:0;top:93px;width:1px;height:633px;background:#dadad6"></div>
<div id="status">
 <div class="txt">Drag to orbit. Shift = Pan, Option = suspend gravity.</div>
 <div id="meas">Measurements</div>
 <div id="mbox"></div>
</div>
<svg width="1200" height="750" viewBox="0 0 1200 750" style="position:absolute;left:0;top:0;pointer-events:none;will-change:transform"><path d="M15.8,46.3 L15.8,59.3 L18.8,56.2 L21.2,60.6 L23.2,59.6 L20.9,55.2 L24.8,54.8 Z" fill="#000" stroke="#fff" stroke-width="0.9" stroke-linejoin="round"/><path d="M44.2,57.8 L47.5,51.8 L55.4,43.4 L62.6,45.2 L61.6,48.8 L53.8,62.4 Z" fill="#f070a0" stroke="#2a2a2a" stroke-width="0.9" stroke-linejoin="round"/><path d="M47.5,51.8 L55.4,43.4 L62.6,45.2 L54.4,53.6 Z" fill="#f5a6c8" stroke="#2a2a2a" stroke-width="0.7" stroke-linejoin="round"/><path d="M47.5,51.8 L54.4,53.6 L53.8,62.4" fill="none" stroke="#fbd0e0" stroke-width="0.8"/><path d="M78.3,62.3 L80.6,57.6 L93.9,44.6 L96.1,46.8 L82.9,59.9 Z" fill="#8e1c20" stroke="#1a1a1a" stroke-width="0.9" stroke-linejoin="round"/><path d="M78.3,62.3 L80.6,57.6 L82.9,59.9 Z" fill="#c8c070" stroke="#1a1a1a" stroke-width="0.6"/><path d="M93.9,44.6 L96.1,46.8" stroke="#333" stroke-width="2.2"/><path d="M100.1,51.6 L106.5,51.6 L103.3,54.8 Z" fill="#000"/><path d="M140.10000000000002,51.6 L146.5,51.6 L143.3,54.8 Z" fill="#000"/><path d="M180.10000000000002,51.6 L186.5,51.6 L183.3,54.8 Z" fill="#000"/><path d="M118.8,45.3 L135.4,45.3 L118.8,61.5" fill="none" stroke="#e8412c" stroke-width="1.1"/><path d="M135.4,45.3 Q134.5,58.5 118.8,61.5" fill="none" stroke="#111" stroke-width="0.9"/><circle cx="118.8" cy="45.3" r="1.5" fill="#e8412c"/><circle cx="135.4" cy="45.3" r="1.5" fill="#e8412c"/><circle cx="118.8" cy="61.5" r="1.5" fill="#e8412c"/><rect x="159.3" y="44.6" width="14.5" height="17.2" fill="#a8a592" stroke="#4a4a40" stroke-width="0.9" rx="0.6"/><path d="M159.4,61.6 L173.4,45.2" stroke="#e8412c" stroke-width="1.1"/><circle cx="159.4" cy="61.6" r="1.4" fill="#e8412c"/><circle cx="173.4" cy="45.2" r="1.4" fill="#e8412c"/><path d="M196.8,53.6 L206.2,49.2 L217,53.4 L205.4,58.2 Z" fill="#b0b09c" stroke="#2a2a22" stroke-width="0.9" stroke-linejoin="round"/><path d="M196.8,53.6 L196.8,55.8 L205.4,62.6 L217,56 L217,53.4 L205.4,58.2 Z" fill="#707060" stroke="#2a2a22" stroke-width="0.9" stroke-linejoin="round"/><path d="M206.2,44.2 L210.4,50.4 L208.4,50.4 L208.4,54.2 L204.2,54.2 L204.2,50.4 L202.1,50.4 Z" fill="#e8412c" stroke="#3a1010" stroke-width="0.6" stroke-linejoin="round"/><path d="M230.2,47.2 A10.5,10.5 0 0 1 245.8,62.6" fill="none" stroke="#e8412c" stroke-width="1.2"/><path d="M232.2,54.6 Q235,49.5 240.2,48.5 M240.5,60.5 Q243.5,57.5 244.8,52.5" fill="none" stroke="#333" stroke-width="1"/><path d="M238.3,53.4 L243,49.4 L241.6,47.9 L248.4,45 L246.2,52 L244.6,50.6 L240.2,55.3 Z" fill="#e8412c" stroke="#3a1010" stroke-width="0.6" stroke-linejoin="round"/><path d="M273.3,43.8 L277.1,47.8 L274.6,47.8 L274.6,52.1 L278.90000000000003,52.1 L278.90000000000003,49.6 L282.90000000000003,53.4 L278.90000000000003,57.199999999999996 L278.90000000000003,54.699999999999996 L274.6,54.699999999999996 L274.6,59.0 L277.1,59.0 L273.3,63.0 L269.5,59.0 L272.0,59.0 L272.0,54.699999999999996 L267.7,54.699999999999996 L267.7,57.199999999999996 L263.7,53.4 L267.7,49.6 L267.7,52.1 L272.0,52.1 L272.0,47.8 L269.5,47.8 Z" fill="#e8412c" stroke="#3a1010" stroke-width="0.6" stroke-linejoin="round"/><path d="M300.02,50.81 A7.0,7.0 0 0 1 312.33,49.18" fill="none" stroke="#3a1010" stroke-width="3.4"/><path d="M300.02,50.81 A7.0,7.0 0 0 1 312.33,49.18" fill="none" stroke="#e8412c" stroke-width="2.2"/><path d="M315.28,47.12 L313.55,54.05 L309.39,51.25 Z" fill="#e8412c" stroke="#3a1010" stroke-width="0.6" stroke-linejoin="round"/><path d="M313.18,55.59 A7.0,7.0 0 0 1 300.87,57.22" fill="none" stroke="#3a1010" stroke-width="3.4"/><path d="M313.18,55.59 A7.0,7.0 0 0 1 300.87,57.22" fill="none" stroke="#e8412c" stroke-width="2.2"/><path d="M297.92,59.28 L299.65,52.35 L303.81,55.15 Z" fill="#e8412c" stroke="#3a1010" stroke-width="0.6" stroke-linejoin="round"/><rect x="330.6" y="42.8" width="20" height="20.5" fill="none" stroke="#f0a0a0" stroke-width="0.9"/><rect x="330.9" y="47.8" width="14.8" height="15.2" fill="#a6a68a" stroke="#3a3a30" stroke-width="0.8"/><path d="M350.8,42.6 L348.6,50.2 L346.9,48.5 L343.2,52.3 L340.5,49.6 L344.2,45.9 L342.6,44.3 Z" fill="#e8412c" stroke="#3a1010" stroke-width="0.6" stroke-linejoin="round"/><path d="M364.6,58.8 Q361.8,51 367.6,46.6 Q374.6,42.4 381.6,45.6 Q384.2,48.2 382.6,51.4 L378.2,50.2 Q373.4,48.6 370.4,51.6 Q368.6,54.6 370.8,58.6 L372.4,60.4 Q370.4,63.4 367.2,62.4 Q365.4,61.2 364.6,58.8 Z" fill="#6e6e5e" stroke="#111" stroke-width="1.3" stroke-linejoin="round"/><path d="M366.4,55 Q366.4,49.5 371.5,47.2" fill="none" stroke="#a8a890" stroke-width="1"/><path d="M379,49 Q373.4,48.2 370.8,52.4 Q369.6,56.4 374.2,58.4 L373.8,60.8 L379.6,57.6 L374.4,53.6 L374.4,55.8 Q372.8,55 373.8,53 Q375.2,51.4 379.4,52.4 Z" fill="#e8412c" stroke="#3a1010" stroke-width="0.5" stroke-linejoin="round"/><path d="M400.2,60.6 L408.4,55.8 L409.6,57.8 L401.4,62.6 Z" fill="#e0d828" stroke="#222" stroke-width="0.6"/><path d="M398.6,60.4 L401.2,59.2 L402.6,62.4 L400,63.8 Z" fill="#111"/><ellipse cx="410.4" cy="50.4" rx="4.6" ry="6.4" transform="rotate(38 410.4 50.4)" fill="#a0a0a0" stroke="#111" stroke-width="1.6"/><ellipse cx="410.8" cy="50" rx="2" ry="3.4" transform="rotate(38 410.8 50)" fill="#f4ec10"/><path d="M435.2,61.8 L449.2,46.2 Q439.4,45.6 433.6,51.2 Q430.6,56.2 435.2,61.8 Z" fill="#c8b818" stroke="#111" stroke-width="1" stroke-linejoin="round"/><path d="M437.2,55.6 L444.6,48.4 Q439.4,48.6 436.8,51.6 Q435.8,53.6 437.2,55.6 Z" fill="#bdbdb6" stroke="#333" stroke-width="0.5"/><rect x="469.8" y="44.4" width="13" height="11.8" fill="#fff" stroke="#333" stroke-width="0.8"/><text x="476.3" y="53.6" font-family="Liberation Serif" font-size="8.6" text-anchor="middle" fill="#111">A1</text><path d="M469.6,50.5 L467.5,50.5 L467.5,59" fill="none" stroke="#333" stroke-width="0.8"/><path d="M465.8,58.4 L469.2,58.4 L467.5,62.4 Z" fill="#111"/><path d="M498.3,52.6 L506.7,61.3 M505.4,44.3 L514.6,53.4 M497.8,58 L510.6,45" fill="none" stroke="#222" stroke-width="0.8"/><circle cx="506.6" cy="61.2" r="1.3" fill="#3cc840"/><circle cx="514.4" cy="53.2" r="1.3" fill="#3cc840"/><text x="501.4" y="49.8" font-family="Liberation Sans" font-size="6.5" fill="#333" transform="rotate(-45 501.4 48)">3</text><path d="M533,50 Q535,45 540,44.6 Q546,45 546.6,48.6 L547.4,58 Q544,61.6 538.6,60.8 Q534.5,59 533.4,54 Z" fill="#222" stroke="#111" stroke-width="0.8"/><path d="M534.5,49.6 Q536,46 540.5,45.8 Q544.6,46.3 545,48.5 Q541,50.5 534.5,49.6 Z" fill="#8ab0b0"/><path d="M539.5,53 L545,51 L546,57.8 L541,59.2 Z" fill="#e0d8a0"/><path d="M542.5,47.5 L543.8,51 M544,46.5 Q548,45.5 547.6,49.6" fill="none" stroke="#333" stroke-width="0.9"/><path d="M538.4,50 Q533,50.5 530.2,55.8 Q529.5,60 532,62.4 Q533.6,57.5 536.2,55.8 Q539,54.4 538.4,50 Z" fill="#f0b020" stroke="#222" stroke-width="0.5"/><path d="M564.0,47.7 L564.0,49.800000000000004 L566.5,56.800000000000004 L575.5,54.800000000000004 L575.5,52.7 L566.5,54.7 Z" fill="#5e5e52" stroke="#151515" stroke-width="1.0" stroke-linejoin="round"/><path d="M564.0,47.7 L572.5,45.7 L575.5,52.7 L566.5,54.7 Z" fill="#8a8a78" stroke="#151515" stroke-width="1.0" stroke-linejoin="round"/><path d="M571.0,50.7 L571.0,52.800000000000004 L573.5,59.800000000000004 L582.5,57.800000000000004 L582.5,55.7 L573.5,57.7 Z" fill="#5e5e52" stroke="#151515" stroke-width="1.0" stroke-linejoin="round"/><path d="M571.0,50.7 L579.5,48.7 L582.5,55.7 L573.5,57.7 Z" fill="#8a8a78" stroke="#151515" stroke-width="1.0" stroke-linejoin="round"/><path d="M597.4000000000001,47.7 L597.4000000000001,49.800000000000004 L599.9000000000001,56.800000000000004 L608.9000000000001,54.800000000000004 L608.9000000000001,52.7 L599.9000000000001,54.7 Z" fill="none" stroke="#a0a09c" stroke-width="0.8" stroke-linejoin="round"/><path d="M597.4000000000001,47.7 L605.9000000000001,45.7 L608.9000000000001,52.7 L599.9000000000001,54.7 Z" fill="none" stroke="#a0a09c" stroke-width="0.8" stroke-linejoin="round"/><path d="M604.4000000000001,50.7 L604.4000000000001,52.800000000000004 L606.9000000000001,59.800000000000004 L615.9000000000001,57.800000000000004 L615.9000000000001,55.7 L606.9000000000001,57.7 Z" fill="none" stroke="#a0a09c" stroke-width="0.8" stroke-linejoin="round"/><path d="M604.4000000000001,50.7 L612.9000000000001,48.7 L615.9000000000001,55.7 L606.9000000000001,57.7 Z" fill="none" stroke="#a0a09c" stroke-width="0.8" stroke-linejoin="round"/><path d="M604.5,50.2 L608,49.6 L609.4,54.8 L606,55.6 Z" fill="#a8a8a0"/><path d="M630.7,47.7 L630.7,49.800000000000004 L633.2,56.800000000000004 L642.2,54.800000000000004 L642.2,52.7 L633.2,54.7 Z" fill="#a4a49e" stroke="#8e8e8a" stroke-width="0.9" stroke-linejoin="round"/><path d="M630.7,47.7 L639.2,45.7 L642.2,52.7 L633.2,54.7 Z" fill="#b8b8b0" stroke="#8e8e8a" stroke-width="0.9" stroke-linejoin="round"/><path d="M637.7,50.7 L637.7,52.800000000000004 L640.2,59.800000000000004 L649.2,57.800000000000004 L649.2,55.7 L640.2,57.7 Z" fill="#a4a49e" stroke="#8e8e8a" stroke-width="0.9" stroke-linejoin="round"/><path d="M637.7,50.7 L646.2,48.7 L649.2,55.7 L640.2,57.7 Z" fill="#b8b8b0" stroke="#8e8e8a" stroke-width="0.9" stroke-linejoin="round"/><path d="M664.0,47.7 L664.0,49.800000000000004 L666.5,56.800000000000004 L675.5,54.800000000000004 L675.5,52.7 L666.5,54.7 Z" fill="#a4a49e" stroke="#8e8e8a" stroke-width="0.8" stroke-linejoin="round"/><path d="M664.0,47.7 L672.5,45.7 L675.5,52.7 L666.5,54.7 Z" fill="#b8b8b0" stroke="#8e8e8a" stroke-width="0.8" stroke-linejoin="round"/><path d="M671.0,50.7 L671.0,52.800000000000004 L673.5,59.800000000000004 L682.5,57.800000000000004 L682.5,55.7 L673.5,57.7 Z" fill="none" stroke="#9a9a96" stroke-width="0.8" stroke-linejoin="round"/><path d="M671.0,50.7 L679.5,48.7 L682.5,55.7 L673.5,57.7 Z" fill="none" stroke="#9a9a96" stroke-width="0.8" stroke-linejoin="round"/><path d="M697.4000000000001,47.7 L697.4000000000001,49.800000000000004 L699.9000000000001,56.800000000000004 L708.9000000000001,54.800000000000004 L708.9000000000001,52.7 L699.9000000000001,54.7 Z" fill="#a4a49e" stroke="#8e8e8a" stroke-width="0.9" stroke-linejoin="round"/><path d="M697.4000000000001,47.7 L705.9000000000001,45.7 L708.9000000000001,52.7 L699.9000000000001,54.7 Z" fill="#b8b8b0" stroke="#8e8e8a" stroke-width="0.9" stroke-linejoin="round"/><path d="M704.4000000000001,50.7 L704.4000000000001,52.800000000000004 L706.9000000000001,59.800000000000004 L715.9000000000001,57.800000000000004 L715.9000000000001,55.7 L706.9000000000001,57.7 Z" fill="#a4a49e" stroke="#8e8e8a" stroke-width="0.9" stroke-linejoin="round"/><path d="M704.4000000000001,50.7 L712.9000000000001,48.7 L715.9000000000001,55.7 L706.9000000000001,57.7 Z" fill="#b8b8b0" stroke="#8e8e8a" stroke-width="0.9" stroke-linejoin="round"/><circle cx="706" cy="53.5" r="2" fill="none" stroke="#8e8e8a" stroke-width="0.8"/><path d="M730.7,47.7 L730.7,49.800000000000004 L733.2,56.800000000000004 L742.2,54.800000000000004 L742.2,52.7 L733.2,54.7 Z" fill="#5e90c8" stroke="#6a7a8a" stroke-width="0.9" stroke-linejoin="round"/><path d="M730.7,47.7 L739.2,45.7 L742.2,52.7 L733.2,54.7 Z" fill="#82b6ee" stroke="#6a7a8a" stroke-width="0.9" stroke-linejoin="round"/><path d="M737.7,50.7 L737.7,52.800000000000004 L740.2,59.800000000000004 L749.2,57.800000000000004 L749.2,55.7 L740.2,57.7 Z" fill="#a4a49e" stroke="#8e8e8a" stroke-width="0.9" stroke-linejoin="round"/><path d="M737.7,50.7 L746.2,48.7 L749.2,55.7 L740.2,57.7 Z" fill="#b8b8b0" stroke="#8e8e8a" stroke-width="0.9" stroke-linejoin="round"/><path d="M739.2,51 L742.6,50.4 L743.6,54.6 L740.2,55.2 Z" fill="#f4f4f4" stroke="#8e8e8a" stroke-width="0.5"/><path d="M771.8,54.4 L771.8,62" stroke="#9ab0d8" stroke-width="1.1"/><path d="M771.8,54.4 L766,50.6 M771.8,54.4 L765.8,58" stroke="#e6a0a0" stroke-width="0.9"/><path d="M771.8,54.4 L765.8,58" stroke="#9ed09e" stroke-width="0.9"/><path d="M771.8,54.4 L771.8,48.5" stroke="#1a3aa8" stroke-width="1.6"/><path d="M769.6,49.5 L771.8,44.6 L774,49.5 Z" fill="#1a3aa8"/><path d="M771.8,54.4 L777.5,50.4" stroke="#2aa02a" stroke-width="1.6"/><path d="M776,48.6 L780.2,48.2 L778.4,52 Z" fill="#2aa02a"/><path d="M771.8,54.4 L777.5,58.4" stroke="#e03020" stroke-width="1.6"/><path d="M776,60.2 L780.2,60.6 L778.4,56.8 Z" fill="#e03020"/><circle cx="771.8" cy="54.4" r="1.4" fill="#000"/><path d="M803.2,58.6 L811.2,63.4 M810.4,58.4 L802.6,63.2" stroke="#ee5040" stroke-width="1.1"/><path d="M806.7,46.6 Q809.6,47.4 809.8,51 L810.6,53.4 L809.8,54 Q809.4,58.8 808.2,60.2 L805.2,60.2 Q804,58.8 803.6,54 L802.8,53.4 L803.6,51 Q803.8,47.4 806.7,46.6 Z" fill="#fff" stroke="#111" stroke-width="1.1" stroke-linejoin="round"/><circle cx="806.7" cy="44.6" r="1.6" fill="#111"/><path d="M806.7,58 L806.7,60.4" stroke="#111" stroke-width="0.8"/><path d="M833.5,57 Q840.5,61.5 848.5,55.5 Q845,60 840,60.2 Q836,60 833.5,57 Z" fill="#c8c8c8"/><path d="M832.4,54.6 Q838.4,48.6 847,51.2 Q842.6,58.4 832.4,54.6 Z" fill="#fff" stroke="#1e1e1e" stroke-width="1"/><circle cx="839.8" cy="53.3" r="3.3" fill="#1a1a1a"/><circle cx="840.6" cy="52.3" r="0.9" fill="#e0e0e0"/><path d="M830.8,54.8 Q835.5,45.2 846,46.4 Q849.6,47.4 849.8,51 Q846,47.8 839,48.3 Q834.2,49.4 830.8,54.8 Z" fill="#1e1e1e"/><path d="M23.6,4.2 Q24.3,2.6 25.8,2.2 Q25.9,3.8 24.9,4.8 Q24.1,5.6 23.6,4.2 Z" fill="#fff"/><path d="M22.8,6 Q24.2,5 26.2,5.2 Q27.6,5.4 28.4,6.6 Q26.8,7.6 27,9.6 Q27.2,11.4 28.8,12.2 Q28.2,13.8 27.2,14.8 Q26.4,15.8 25.4,15.5 Q24.5,15 23.2,15.2 Q22,15.5 21.2,15.6 Q20,15.3 18.8,13.2 Q17.2,10 18.2,7.8 Q19.2,5.6 21.2,5.6 Q22,5.7 22.8,6 Z" fill="#fff"/><path d="M939.6,6.2 L945.2,11.4 L942.4,14 L942.4,3.6 L945.2,6.4 L939.6,11.4" fill="none" stroke="#5a5b66" stroke-width="1.1"/><path d="M959.2,6.4 A11,11 0 0 1 975,6.4" fill="none" stroke="#fff" stroke-width="1.8"/><path d="M961.8,9 A7.4,7.4 0 0 1 972.4,9" fill="none" stroke="#fff" stroke-width="1.8"/><path d="M964.5,11.6 A3.6,3.6 0 0 1 969.7,11.6" fill="none" stroke="#fff" stroke-width="1.8"/><circle cx="967.1" cy="13.6" r="1.2" fill="#fff"/><path d="M983.8,7 L986.6,7 L990.4,3.6 L990.4,14.4 L986.6,11 L983.8,11 Z" fill="#fff"/><path d="M992.4,6.6 Q993.8,9 992.4,11.4" fill="none" stroke="#fff" stroke-width="1"/><rect x="1037.8" y="4.8" width="16" height="8.6" rx="2" fill="none" stroke="#e8e8e8" stroke-width="1.1"/><rect x="1039.2" y="6.1" width="7" height="6" fill="#fff"/><path d="M1054.8,7.3 Q1057,7.6 1057,8.9 Q1057,10.3 1054.8,10.6 Z" fill="#e8e8e8"/><circle cx="1145.2" cy="7.6" r="4.1" fill="none" stroke="#fff" stroke-width="1.5"/><path d="M1148.2,10.6 L1152,14.4" stroke="#fff" stroke-width="1.7"/><rect x="1166" y="3.6999999999999997" width="2" height="1.9" fill="#fff"/><rect x="1169.4" y="3.6999999999999997" width="11.6" height="1.9" fill="#fff"/><rect x="1166" y="7.699999999999999" width="2" height="1.9" fill="#fff"/><rect x="1169.4" y="7.699999999999999" width="11.6" height="1.9" fill="#fff"/><rect x="1166" y="11.7" width="2" height="1.9" fill="#fff"/><rect x="1169.4" y="11.7" width="11.6" height="1.9" fill="#fff"/><path d="M487,22.6 L492.4,22.6 L494.6,24.8 L494.6,33.4 L487,33.4 Z" fill="#fafafa" stroke="#888" stroke-width="0.6"/><path d="M486.2,25.6 L490.6,24.6 L491.8,28.6 L488.6,30.4 L486,28.8 Z" fill="#d83030"/><rect x="490.4" y="31" width="3" height="1.3" fill="#222"/><path d="M0,19 L5,19 A5,5 0 0 0 0,24 Z" fill="#1d1e2a"/><path d="M1200,19 L1195,19 A5,5 0 0 1 1200,24 Z" fill="#1d1e2a"/><path d="M0,750 L0,745 A5,5 0 0 0 5,750 Z" fill="#151515"/><path d="M1200,750 L1200,745 A5,5 0 0 1 1195,750 Z" fill="#151515"/><circle cx="13.3" cy="739" r="6.6" fill="none" stroke="#a8a8a8" stroke-width="1.2"/><path d="M10.6,737.6 A2.7,2.7 0 1 1 16,737.6 Q15.6,740 13.3,743.6 Q11,740 10.6,737.6 Z" fill="#a0a0a0"/><circle cx="33.3" cy="739" r="6.6" fill="none" stroke="#1a1a1a" stroke-width="1.3"/><circle cx="33.3" cy="735.6" r="1.2" fill="#111"/><path d="M31.8,737.4 L34.8,737.4 L34.6,740.6 L34,740.6 L34,743.4 L32.6,743.4 L32.6,740.6 L32,740.6 Z" fill="#111"/><circle cx="53.3" cy="739" r="6.6" fill="none" stroke="#b4b4b4" stroke-width="1.2"/><circle cx="53.3" cy="736.4" r="2.3" fill="#a8a8a8"/><path d="M48.6,743 Q49.5,739.8 53.3,739.6 Q57.1,739.8 58,743 Q55.5,745.2 53.3,745.2 Q51,745.2 48.6,743 Z" fill="#a8a8a8"/><rect x="64.2" y="730" width="0.8" height="16" fill="#d0d0d0"/><circle cx="76" cy="739" r="7.2" fill="#1f4f96" stroke="#0a0a0a" stroke-width="1.2"/><text x="76" y="743.2" font-family="Liberation Sans" font-weight="bold" font-size="11" text-anchor="middle" fill="#000">?</text></svg>
</body></html>
